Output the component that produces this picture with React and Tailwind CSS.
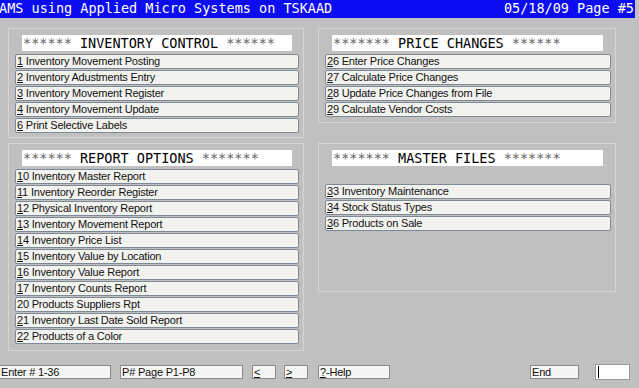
import React from 'react'

const mono = { fontFamily: '"DejaVu Sans Mono", "Liberation Mono", monospace' }

const inventory = [
    ['1', ' Inventory Movement Posting'],
    ['2', ' Inventory Adustments Entry'],
    ['3', ' Inventory Movement Register'],
    ['4', ' Inventory Movement Update'],
    ['6', ' Print Selective Labels'],
]

const prices = [
    ['2', '6 Enter Price Changes'],
    ['2', '7 Calculate Price Changes'],
    ['2', '8 Update Price Changes from File'],
    ['2', '9 Calculate Vendor Costs'],
]

const reports = [
    ['1', '0 Inventory Master Report'],
    ['1', '1 Inventory Reorder Register'],
    ['1', '2 Physical Inventory Report'],
    ['1', '3 Inventory Movement Report'],
    ['1', '4 Inventory Price List'],
    ['1', '5 Inventory Value by Location'],
    ['1', '6 Inventory Value Report'],
    ['1', '7 Inventory Counts Report'],
    null,
    ['2', '1 Inventory Last Date Sold Report'],
    ['2', '2 Products of a Color'],
]

const masters = [
    ['3', '3 Inventory Maintenance'],
    ['3', '4 Stock Status Types'],
    ['3', '6 Products on Sale'],
]

function MenuButton({ hot, rest, children, wide }) {
    return (
        <div className={`h-[15px] mb-[1px] ${wide ? 'w-[286px]' : 'w-[284px]'} border border-[#7d8996] rounded-[2px] bg-[#f2f2ef] text-[11px] tracking-[-0.2px] leading-[13px] text-[#111] pl-[1px] whitespace-nowrap overflow-hidden`}>
            {children ? children : <><span className="underline">{hot}</span>{rest}</>}
        </div>
    )
}

function Header({ left, title, right, wide }) {
    return (
        <div className={`h-[16px] ${wide ? 'w-[271px]' : 'w-[270px]'} bg-white text-[13.5px] leading-[16px] pl-[1px] whitespace-pre overflow-hidden`} style={mono}>
            <span className="text-[#666]">{left}</span>
            <span className="text-black"> {title} </span>
            <span className="text-[#666]">{right}</span>
        </div>
    )
}

function BottomBox({ className, children }) {
    return (
        <div className={`h-[14px] border border-[#8a8a8a] bg-[#f4f4f2] text-[11px] tracking-[-0.2px] leading-[12px] text-[#111] pl-[1px] whitespace-nowrap ${className}`}>
            {children}
        </div>
    )
}

export default function App() {
    return (
        <div className="w-[639px] h-[388px] bg-[#c0c0c0] overflow-hidden" style={{ fontFamily: '"Liberation Sans", Arial, sans-serif' }}>
            <div className="w-[635px] h-[18px] bg-[#0c0cf2] text-white text-[13.5px] leading-[17px] flex justify-between whitespace-pre" style={mono}>
                <span className="-ml-[1px]">AMS using Applied Micro Systems on TSKAAD</span>
                <span className="mr-[1px]">05/18/09 Page #5</span>
            </div>

            <div className="flex pt-[10px] pl-[8px] gap-[14px] h-[346px]">
                <div className="flex flex-col w-[296px]">
                    <div className="h-[110px] border border-[#d6d6d6] pt-[6px]">
                        <div className="pl-[13px] mb-[3px]">
                            <Header left="******" title="INVENTORY CONTROL" right="******" />
                        </div>
                        <div className="pl-[6px]">
                            {inventory.map(([h, r]) => <MenuButton key={h + r} hot={h} rest={r} />)}
                        </div>
                    </div>
                    <div className="h-[208px] mt-[5px] border border-[#d6d6d6] pt-[6px]">
                        <div className="pl-[13px] mb-[3px]">
                            <Header left="******" title="REPORT OPTIONS" right="*******" />
                        </div>
                        <div className="pl-[6px]">
                            {reports.map((item, i) =>
                                item ? <MenuButton key={i} hot={item[0]} rest={item[1]} /> :
                                    <MenuButton key={i}>20 Products <span className="underline"> </span>Suppliers Rpt</MenuButton>
                            )}
                        </div>
                    </div>
                </div>

                <div className="flex flex-col w-[298px]">
                    <div className="h-[95px] border border-[#d6d6d6] pt-[6px]">
                        <div className="pl-[13px] mb-[3px]">
                            <Header left="*******" title="PRICE CHANGES" right="******" wide />
                        </div>
                        <div className="pl-[6px]">
                            {prices.map(([h, r]) => <MenuButton key={r} hot={h} rest={r} wide />)}
                        </div>
                    </div>
                    <div className="h-[149px] mt-[20px] border border-[#d6d6d6] pt-[6px]">
                        <div className="pl-[13px] mb-[18px]">
                            <Header left="*******" title="MASTER FILES" right="*******" wide />
                        </div>
                        <div className="pl-[6px]">
                            {masters.map(([h, r]) => <MenuButton key={r} hot={h} rest={r} wide />)}
                        </div>
                    </div>
                </div>
            </div>

            <div className="flex items-center">
                <BottomBox className="w-[112px] -ml-[1px]">Enter # 1-36</BottomBox>
                <BottomBox className="w-[123px] ml-[9px]">P# Page P1-P8</BottomBox>
                <BottomBox className="w-[24px] ml-[9px]"><span className="underline">&lt;</span></BottomBox>
                <BottomBox className="w-[24px] ml-[8px]"><span className="underline">&gt;</span></BottomBox>
                <BottomBox className="w-[72px] ml-[10px]"><span className="underline">?</span>-Help</BottomBox>
                <BottomBox className="w-[49px] ml-[140px]">End</BottomBox>
                <div className="h-[16px] w-[35px] ml-[16px] bg-white border border-[#9a9a9a] flex items-center pl-[2px]">
                    <div className="w-[1px] h-[12px] bg-black" />
                </div>
            </div>
        </div>
    )
}
